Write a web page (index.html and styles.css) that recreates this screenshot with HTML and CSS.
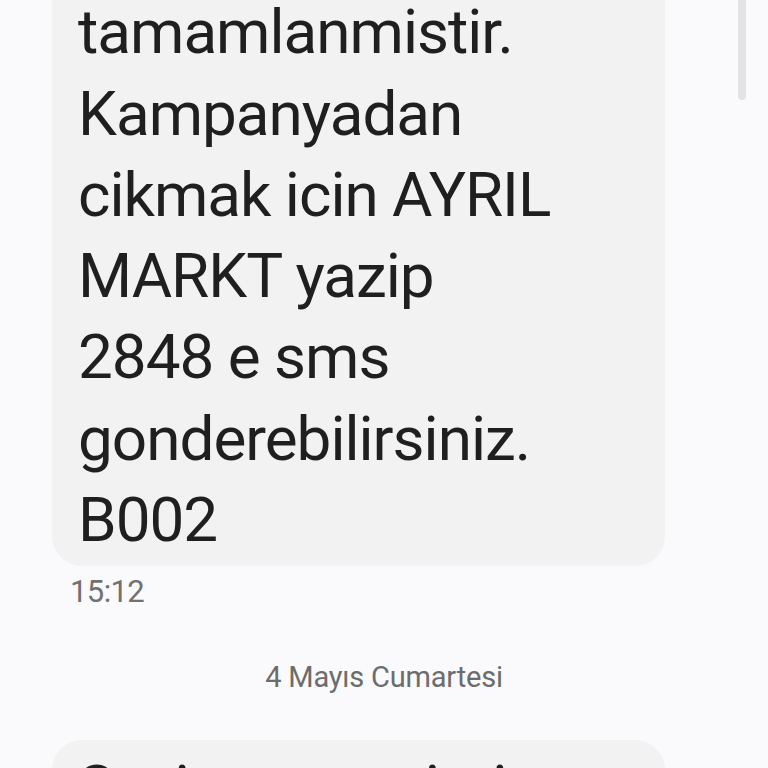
FILE: index.html
```html
<!DOCTYPE html>
<html lang="tr">
<head>
  <meta charset="UTF-8">
  <meta name="viewport" content="width=device-width, initial-scale=1.0">
  <title>Mesajlar</title>
  <link rel="stylesheet" href="styles.css">
</head>
<body>

  <div class="scrollbar"></div>

  <div class="thread">
    <div class="msg">
      <div class="bubble">
        <p class="msg-text">Katiliminiz tamamlanmistir. Kampanyadan cikmak icin AYRIL MARKT yazip 2848 e sms gonderebilirsiniz. B002</p>
      </div>
      <span class="time">15:12</span>
    </div>

    <div class="day">4 Mayıs Cumartesi</div>

    <div class="msg">
      <div class="bubble">
        <p class="msg-text">Sayin musterimiz, kampanya</p>
      </div>
    </div>
  </div>

</body>
</html>
```

FILE: styles.css
```css
* {
  box-sizing: border-box;
  margin: 0;
  padding: 0;
}

body {
  background: #fafafc;
  font-family: Roboto, "Noto Sans", sans-serif;
  color: #1f1f1f;
  height: 768px;
  overflow: hidden;
}

/* list is scrolled: first bubble starts above the window */
.thread {
  margin-top: -96px;
  padding-left: 52px;
}

.msg {
  display: flex;
  flex-direction: column;
  align-items: flex-start;
}

.bubble {
  width: 613px;
  background: #f2f2f2;
  border-radius: 30px;
  padding: 6px 26px;
}

.msg-text {
  max-width: 482px;
  font-size: 62px;
  line-height: 81.3px;
  letter-spacing: -1px;
}

.time {
  margin: 8px 0 0 18px;
  font-size: 31px;
  line-height: 36px;
  color: #717171;
  letter-spacing: -0.6px;
}

.day {
  margin: 50px 0 46px -52px;
  text-align: center;
  font-size: 29px;
  line-height: 34px;
  color: #6c6c6c;
  letter-spacing: -0.2px;
}

.day + .msg .bubble {
  padding-top: 7px;
  height: 200px;
}

.scrollbar {
  position: fixed;
  top: 0;
  left: 738px;
  width: 8px;
  height: 100px;
  background: #e3e3e5;
  border-radius: 0 0 4px 4px;
}
```
